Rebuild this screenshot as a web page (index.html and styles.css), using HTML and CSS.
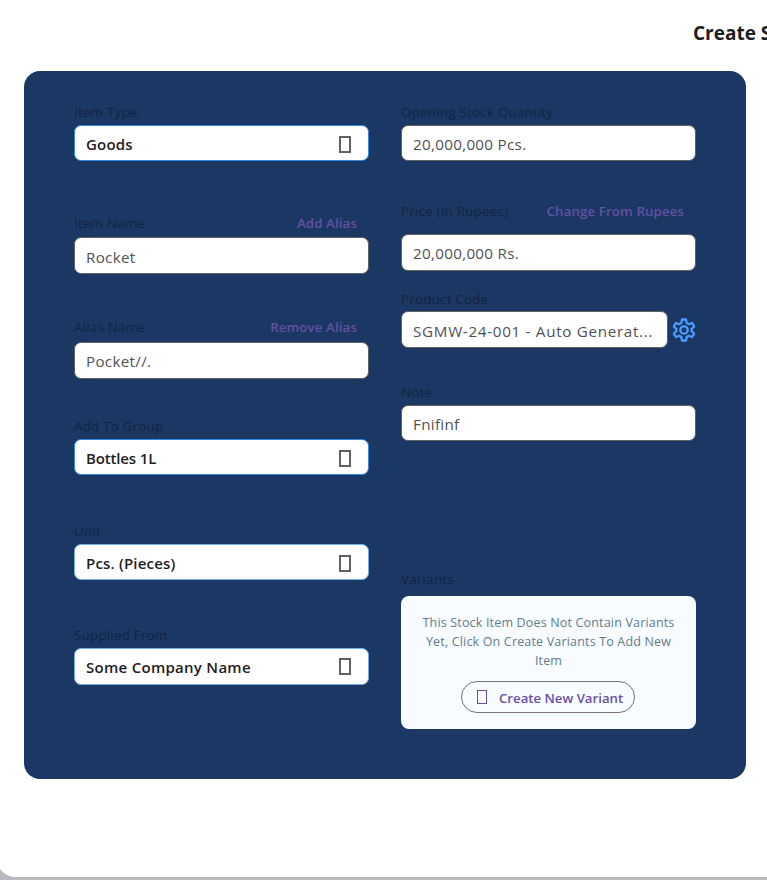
FILE: index.html
```html
<!DOCTYPE html>
<html lang="en">
<head>
<meta charset="utf-8">
<title>Create Stock Item</title>
<link rel="stylesheet" href="styles.css">
</head>
<body>
<main class="sheet">
  <h1 class="title">Create S</h1>
  <form class="card">
    <div class="column">
      <div class="field type">
        <div class="head"><span class="label">Item Type</span></div>
        <div class="control select"><span>Goods</span><i class="box"></i></div>
      </div>
      <div class="field name">
        <div class="head"><span class="label">Item Name</span><a class="link">Add Alias</a></div>
        <div class="control tall">Rocket</div>
      </div>
      <div class="field alias">
        <div class="head"><span class="label">Alias Name</span><a class="link">Remove Alias</a></div>
        <div class="control tall raised">Pocket//.</div>
      </div>
      <div class="field group">
        <div class="head"><span class="label">Add To Group</span></div>
        <div class="control select narrow"><span>Bottles 1L</span><i class="box"></i></div>
      </div>
      <div class="field unit">
        <div class="head"><span class="label">Unit</span></div>
        <div class="control select light"><span>Pcs. (Pieces)</span><i class="box"></i></div>
      </div>
      <div class="field supplier">
        <div class="head"><span class="label">Supplied From</span></div>
        <div class="control select light tall raised"><span>Some Company Name</span><i class="box"></i></div>
      </div>
    </div>
    <div class="column">
      <div class="field quantity">
        <div class="head"><span class="label">Opening Stock Quantity</span></div>
        <div class="control">20,000,000 Pcs.</div>
      </div>
      <div class="field price">
        <div class="head"><span class="label">Price (In Rupees)</span><a class="link">Change From Rupees</a></div>
        <div class="control tall raised">20,000,000 Rs.</div>
      </div>
      <div class="field code">
        <div class="head"><span class="label">Product Code</span></div>
        <div class="code-row">
          <div class="control tall auto">SGMW-24-001 - Auto Generat...</div>
          <svg class="gear" viewBox="0 0 24 24" fill="none" stroke="#4b9bff" stroke-width="2.3" stroke-linejoin="round"><path d="M10 1.5h4l.7 3.4 2.2 1.3 3.3-1.2 2 3.5-2.6 2.3v2.4l2.6 2.3-2 3.5-3.3-1.2-2.2 1.3-.7 3.4h-4l-.7-3.4-2.2-1.3L3.800 19l-2-3.500 2.600-2.300v-2.400L1.800 8.500l2-3.500 3.300 1.200 2.200-1.300z"/><circle cx="12" cy="12" r="3.700"/></svg>
        </div>
      </div>
      <div class="field note">
        <div class="head"><span class="label">Note</span></div>
        <div class="control">Fnifinf</div>
      </div>
      <div class="field variants">
        <div class="head"><span class="label">Variants</span></div>
        <div class="panel">
          <p class="hint">This Stock Item Does Not Contain Variants<br>Yet, Click On Create Variants To Add New<br>Item</p>
          <div class="create"><i class="box small"></i><span>Create New Variant</span></div>
        </div>
      </div>
    </div>
  </form>
</main>
</body>
</html>
```
FILE: styles.css
```css
* { box-sizing: border-box; }
body {
  margin: 0;
  height: 880px;
  overflow: hidden;
  background: #b9b9be;
  font-family: "Open Sans", "Noto Sans", sans-serif;
}
.sheet {
  height: 877px;
  margin-left: -4px;
  padding-left: 4px;
  overflow: hidden;
  background: #fff;
  border-bottom-left-radius: 20px;
}
.title {
  margin: 0 0 0 693px;
  height: 71px;
  padding-top: 18px;
  line-height: 30px;
  font-size: 19px;
  font-weight: 700;
  color: #1c1d20;
  white-space: nowrap;
}
.card {
  display: grid;
  grid-template-columns: 295px 295px;
  column-gap: 32px;
  width: 722px;
  height: 708px;
  margin-left: 24px;
  padding: 31px 50px 0;
  border-radius: 16px;
  background: #1b3864;
}
.head {
  display: flex;
  justify-content: space-between;
  height: 20px;
  margin-bottom: 3px;
  padding-right: 12px;
  line-height: 20px;
  font-size: 13.5px;
  letter-spacing: .15px;
  white-space: nowrap;
}
.label { color: #12243f; }
.link { color: #634fa3; font-weight: 600; font-size: 13.3px; letter-spacing: .1px; }
.control {
  display: flex;
  align-items: center;
  height: 36px;
  padding: 2px 17px 0 11px;
  border: 1px solid #65615f;
  border-radius: 7px;
  background: #fff;
  color: #505155;
  font-size: 15.2px;
  line-height: 22px;
  letter-spacing: .3px;
  white-space: nowrap;
}
.tall { height: 37px; }
.raised { padding-top: 0; }
.select {
  justify-content: space-between;
  border-color: #3388e2;
  color: #1f2024;
  font-size: 15px;
  font-weight: 600;
  letter-spacing: .2px;
}
.narrow { letter-spacing: -.15px; }
.supplier .control { letter-spacing: .28px; }
.light { border-color: #75ade9; }
.box {
  width: 12px;
  height: 17px;
  border: 2px solid #616161;
}
.name { margin-top: 52px; }
.alias { margin-top: 43px; }
.name .head { margin-bottom: 4px; }
.alias .head { margin-bottom: 5px; }
.group { margin-top: 37px; }
.unit { margin-top: 46px; }
.supplier { margin-top: 45px; }
.price { margin-top: 40px; }
.price .head { margin-bottom: 13px; }
.code { margin-top: 18px; }
.code .head { margin-bottom: 2px; }
.note { margin-top: 34px; }
.variants { margin-top: 128px; }
.variants .head { margin-bottom: 7px; }
.code-row { display: flex; align-items: center; gap: 4px; }
.auto { width: 267px; padding-right: 8px; letter-spacing: .7px; }
.gear { width: 24px; height: 24px; flex: none; }
.panel {
  display: flex;
  flex-direction: column;
  align-items: center;
  height: 133px;
  padding-top: 17px;
  border-radius: 8px;
  background: #f8fbff;
}
.hint {
  margin: 0;
  color: #607d8b;
  font-size: 12.5px;
  line-height: 19px;
  letter-spacing: .17px;
  text-align: center;
  white-space: nowrap;
}
.create {
  display: flex;
  align-items: center;
  gap: 12px;
  width: 174px;
  height: 32px;
  margin: 11px 1px 0 0;
  padding-left: 15px;
  border: 1px solid #79747e;
  border-radius: 16px;
  color: #6750a4;
  font-size: 13.2px;
  font-weight: 600;
  white-space: nowrap;
}
.create span { padding-top: 2px; }
.small { width: 10px; height: 14px; border: 1px solid #6750a4; }
```
